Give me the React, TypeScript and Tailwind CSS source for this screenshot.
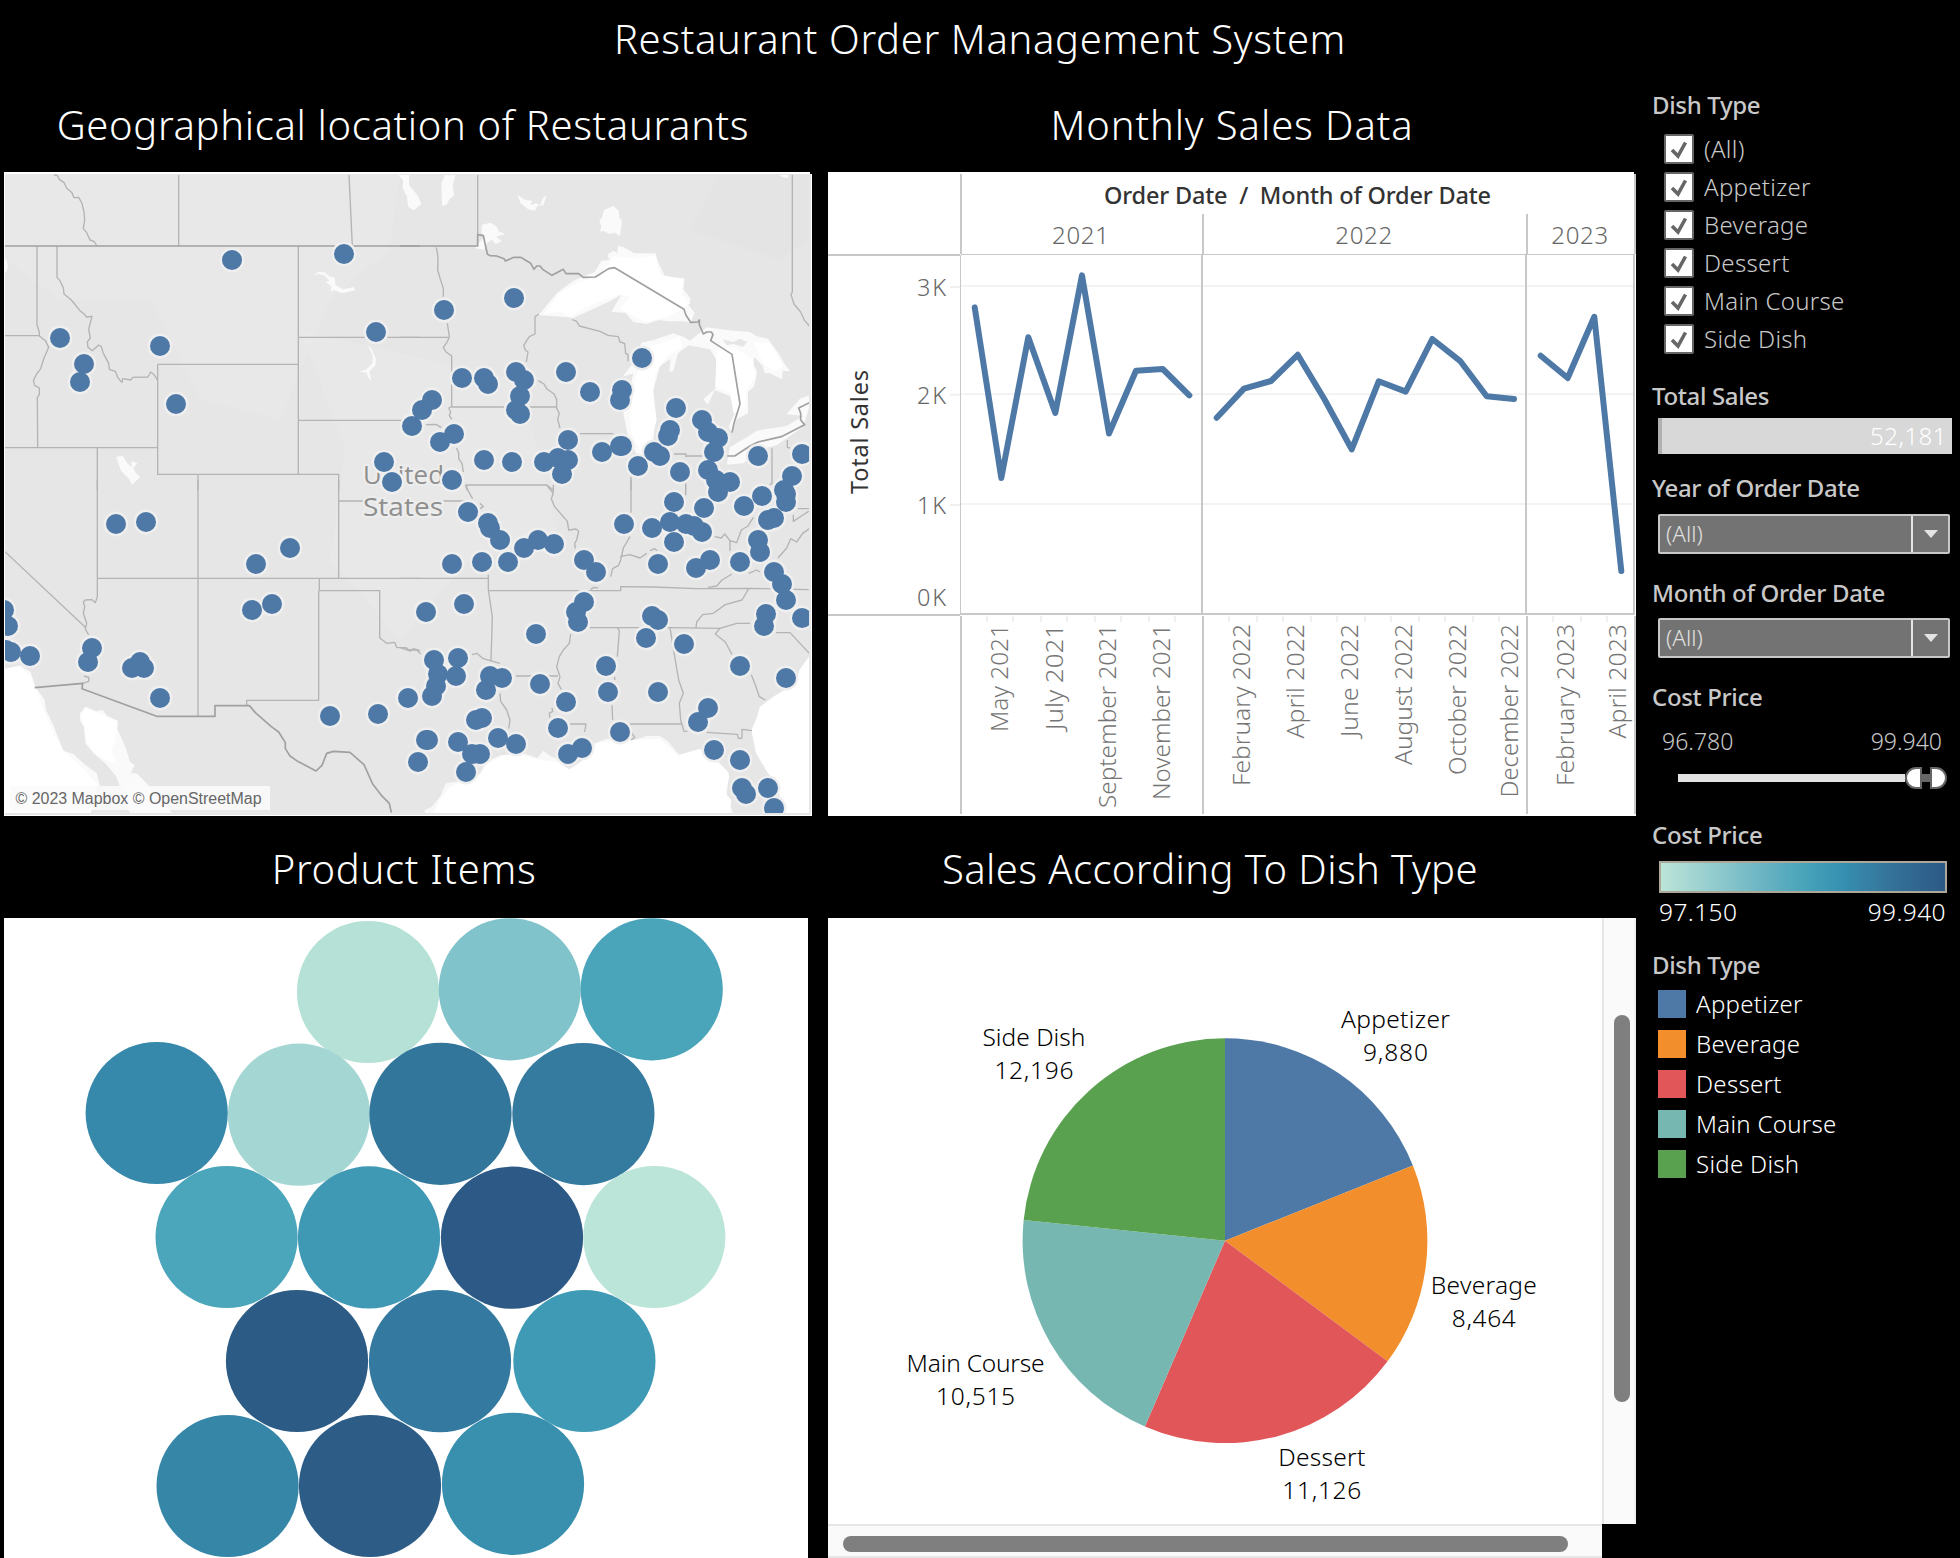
import { ReactNode } from "react";

const FONT = "font-['Noto_Sans',sans-serif]";

const DOTS: [number, number][] = [
  [232, 260], [344, 254], [376, 332], [60, 338], [84, 364], [80, 382], [160, 346], [176, 404], [384, 462], [392, 482],
  [444, 310], [514, 298], [642, 358], [566, 372], [462, 378], [484, 378], [488, 384], [516, 372], [524, 380], [520, 396],
  [516, 410], [520, 414], [432, 400], [422, 410], [412, 426], [440, 442], [454, 434], [590, 392], [622, 390], [620, 400],
  [676, 408], [702, 420], [708, 432], [718, 438], [670, 430], [668, 436], [714, 452], [758, 456], [802, 454], [568, 440],
  [602, 452], [620, 446], [622, 446], [638, 466], [654, 452], [660, 456], [484, 460], [512, 462], [544, 462], [558, 458], [568, 460],
  [562, 474], [452, 480], [680, 472], [708, 470], [716, 480], [730, 482], [792, 476], [784, 490], [762, 496], [468, 512],
  [488, 523], [490, 528], [500, 540], [524, 548], [538, 540], [554, 544], [452, 564], [482, 562], [508, 562], [584, 560],
  [596, 572], [624, 524], [652, 528], [674, 502], [670, 522], [686, 524], [694, 526], [702, 532], [704, 508], [674, 542],
  [658, 564], [696, 568], [710, 560], [740, 562], [744, 506], [718, 492], [786, 494], [786, 502], [768, 520], [774, 518],
  [758, 540], [760, 552], [774, 572], [782, 584], [786, 600], [766, 614], [764, 626], [802, 618], [426, 612], [464, 604],
  [536, 634], [584, 602], [576, 612], [578, 622], [652, 616], [658, 620], [646, 638], [684, 644], [606, 666], [608, 692],
  [658, 692], [740, 666], [786, 678], [434, 660], [458, 658], [438, 674], [456, 676], [436, 686], [432, 696], [408, 698],
  [490, 676], [502, 678], [486, 690], [540, 684], [566, 702], [558, 728], [476, 720], [482, 718], [426, 740], [428, 740],
  [458, 742], [418, 762], [498, 738], [516, 744], [472, 754], [480, 754], [466, 772], [568, 754], [582, 748], [620, 732],
  [708, 708], [698, 722], [714, 750], [740, 760], [742, 788], [746, 794], [768, 788], [774, 808], [116, 524], [146, 522],
  [290, 548], [256, 564], [252, 610], [272, 604], [4, 610], [8, 626], [6, 650], [11, 652], [30, 656], [92, 648], [88, 662],
  [132, 668], [140, 662], [144, 668], [160, 698], [330, 716], [378, 714],
];

const NW = "translate(0 160) scale(0.33333)";
const NE = "translate(400 160) scale(0.33333)";
const SW = "translate(0 480) scale(0.33333)";
const SE = "translate(400 480) scale(0.33333)";

function RestaurantMap() {
  return (
    <svg className="block h-[644px] w-[808px]" viewBox="4 172 808 644">
      <defs>
        <clipPath id="mapArea">
          <rect x="5" y="174" width="804" height="639" />
        </clipPath>
      </defs>
      <path d="M4 172h806v2h2v642H4z" fill="#fff" />
      <rect x="5" y="174" width="806" height="641" fill="#e6e6e6" />
      <g clipPath="url(#mapArea)">
        <path d="M5 174H400L390 250L330 300L280 420L200 400L150 300L60 300L5 260Z" fill="#eaeaea" opacity=".4" />
        <path d="M300 330L520 380L560 540L470 560L400 640L330 560L345 450Z" fill="#eaeaea" opacity=".5" />
        <path d="M690 230L780 260L809 240V174H720Z" fill="#e4e4e4" />

        {/* Lakes and inlets of the north west */}
        <g transform={NW} fill="#fafafa">
          <path d="M1196 45L1228 45L1226 62L1216 68L1244 96L1262 132L1242 150L1226 142L1222 112L1208 84L1210 62Z" />
          <path d="M942 346L954 336L974 337L990 350L1004 352L1006 374L1030 388L1062 381L1066 391L1024 400L1004 390L992 394L994 378L976 366L988 362L972 346L956 342Z" />
          <path d="M1104 554L1114 566L1128 596L1126 616L1116 626L1108 636L1114 662L1104 652L1100 638L1078 635L1096 630L1104 624L1118 608L1118 588Z" />
          <path d="M348 890L368 888L382 910L396 922L394 904L412 910L400 924L406 936L420 952L396 974L388 958L364 934Z" />
          <ellipse cx="14" cy="317" rx="9" ry="20" />
        </g>
        {/* Great Lakes */}
        <g transform={NE} fill="#fafafa">
          <path d="M4 45L26 45L28 76L54 108L64 132L42 150L24 138L20 96Z M124 70L134 46L166 45L158 78L162 106L148 118L140 134L126 138Z" />
          <path d="M352 104L376 120L396 122L392 136L408 130L420 136L428 116L440 104L430 136L412 138L404 152L384 148L362 130Z" />
          <path d="M612 150L640 138L656 152L658 174L666 182L660 228L644 218L628 222L610 212L600 216L604 198L598 182L606 174Z" />
          <path d="M246 194L272 188L290 200L296 214L316 222L288 230L306 244L286 252L276 238L262 250L252 270L224 264L244 240L256 232L244 218Z" />
          <path d="M584 336L604 302L628 300L622 284L640 272L652 280L654 258L672 262L702 280L766 280L776 310L796 352L854 354L850 388L872 416L866 436L884 458L872 486L846 484L802 484L776 480L740 492L700 486L676 458L634 456L664 404L630 424L520 474L490 470L416 466L470 400L520 362Z" />
          <path d="M668 650L700 608L724 548L760 540L820 520L850 530L870 542L920 502L1000 512L1050 516L1068 528L1104 536L1134 578L1150 606L1170 634L1148 632L1146 658L1110 640L1094 640L1088 618L1064 592L1056 606L1072 636L1062 680L1044 696L1044 760L1010 778L996 820L986 800L1004 760L990 708L944 690L924 734L910 718L946 686L950 600L930 568L866 556L834 580L820 632L808 636L812 596L780 618L760 690L768 770L760 840L720 900L686 838L670 760L690 690L700 640Z" />
          <path d="M990 862L1040 832L1070 812L1160 798L1210 768L1160 762L1200 716L1228 706V740L1210 800L1130 856L1074 870L1030 910L980 914Z" />
          <path d="M1138 44H1164V54L1150 52Z" />
        </g>
        <path transform={NE} d="M968 538L1000 546L1020 536L1042 546L1030 560L1000 552L980 556Z" fill="#e6e6e6" />
        <g transform={NE} fill="#fff">
          <path d="M430 464L474 404L530 370L600 350L622 320L640 288L700 296L766 286L780 344L850 358L846 404L870 430L846 448L800 470L736 486L680 456L660 446L690 410L660 402L620 418L560 440L510 472L480 452Z" />
          <path d="M690 770L706 650L750 560L840 530L846 560L800 590L766 640L758 700L770 780L750 850L720 870L694 820Z M950 572L1000 560L1060 600L1066 650L1040 690L1034 740L1000 760L992 700L946 680Z M1060 546L1110 550L1150 620L1120 634L1090 610Z" />
        </g>
        {/* Pacific, Gulf of California, Gulf of Mexico, Atlantic */}
        <g transform={SW}>
          <path d="M15 566L60 556L92 576L106 620L134 660L138 690L160 736L190 812L220 822L250 850L290 880L300 918H15Z M240 700L256 680L290 694L308 690L322 708L354 722L352 748L376 800L390 846L404 856L392 880L410 880L460 930L500 980L518 1000H390L348 888L316 850L280 820L256 790L252 740L240 722Z" fill="#fafafa" />
          <path d="M15 566L60 560L92 590L110 630L130 690L160 760L190 812L250 866L292 914L272 1000H15Z M244 704L258 684L310 706L350 724V756L336 812L350 850L330 846L290 824L262 790Z" fill="#fff" />
        </g>
        <g transform={SE}>
          <path d="M74 990L96 980L120 950L138 910L180 904L240 880L256 848L300 826L370 820L412 834L430 812L450 828L478 838L500 870L540 850L590 850L550 830L584 790L620 776L690 784L740 768L780 768L802 782L838 824L900 806L950 838L986 880L980 950L1000 1000H74Z" fill="#f8f8f8" />
          <path d="M102 996L120 960L150 920L186 904L240 886L262 850L310 826L370 826L420 840L474 846L510 870L560 830L592 788L650 782L700 780L780 776L834 826L900 808L950 848L980 870L988 890L976 940L994 960L990 1000H100Z M1230 526L1198 570L1186 610L1120 650L1080 680L1068 720L1054 750L1068 820L1104 880L1130 910L1150 1000H1230Z" fill="#fff" />
        </g>

        {/* State borders */}
        <g fill="none" stroke="#b4b4b4" strokeWidth="4" strokeLinejoin="round">
          <g transform={NW}>
            <path d="M162 45L172 46L178 58L192 68L200 84L216 98L222 113L236 112L246 130L252 156L254 180L250 206L260 218L270 240L282 244L291 258" />
            <path d="M536 45V258 M1047 45L1057 258" />
            <path d="M111 258V495L118 516L118 528L136 542L146 562L132 594L122 626L110 642L100 662L104 676L118 684L118 704L112 712L113 863" />
            <path d="M171 258V352L180 362L190 384L192 402L214 420L240 452L252 462L260 471L276 469L266 508L271 534L262 546L264 562L277 572L296 555L304 560L310 580L326 610L328 628L346 634L354 654L366 667L368 656L392 660L398 652L444 651L452 636L462 644L473 660" />
            <path d="M15 527H118 M895 258V943 M895 532H1260 M473 613H895 M473 613V943H1016V990 M895 781H1230 M15 863H473 M292 863V990 M594 943V990" />
          </g>
          <g transform={NE}>
            <path d="M233 45V224 M109 262L114 290L113 330L120 354L130 385V410 M142 490L148 530L142 545L130 562L138 576L155 588V740L146 744L152 756L148 766L155 778 M0 532H148 M155 741H470" />
            <path d="M416 462L405 470V522L388 530L371 556L376 570L384 576L379 606 M415 662L432 672L440 686L462 702L470 718L470 745L478 760L473 778L480 804" />
            <path d="M517 479L530 484L538 498L600 514L624 526L655 530L660 546L674 550L677 580L684 584L684 604" />
            <path d="M540 821H640 M822 882H858V892 M858 888H910 M1116 865V970L1110 974 M1162 840V862L1170 864 M1177 45V395L1173 404L1182 432L1202 456L1214 482L1228 498" />
            <path d="M78 794L108 793L124 803 M170 864L176 880L176 896L186 910L190 936 M196 975H440L460 990 M693 950V990 M857 970V990 M200 978V990" />
          </g>
          <g transform={SW}>
            <path d="M292 0V350L286 368L276 359L256 360L250 366L254 380L250 400L260 430L256 448L266 464 M15 215L256 442 M292 295H1260 M594 0V709 M1016 0V295 M1016 63H1090" />
            <path d="M958 295V332H1139V473L1160 490L1184 487L1190 502L1220 504L1230 514L1240 506L1260 512 M956 332V661H740V676 M252 588L266 592V604L248 610" />
          </g>
          <g transform={SE}>
            <path d="M0 295H265 M265 284V330L277 410L273 544 M265 332H662V320L760 321L890 326L1046 325L1226 329 M130 63H200 M196 16L212 46L218 56 M240 70L250 80L240 86" />
            <path d="M440 15L460 40L454 56L464 80L502 124L506 150L528 147L536 154L530 180L524 190L526 206 M693 0V98 M857 16V46 M460 14V36" />
            <path d="M690 170L670 204L662 240L656 256L638 266L632 290 M660 230L690 224L720 234L740 220 M750 212L764 206L772 212 M944 170L964 174L974 162L990 182L1010 188L1024 150L1044 138L1060 112 M990 182V212" />
            <path d="M572 328L582 322L594 324 M570 443H812L960 445L1010 430H1050 M1128 458H1170L1228 520 M888 444L890 426L908 404L940 400L976 374L1026 360L1046 326" />
            <path d="M652 443L658 452L652 530 M644 590V600 M636 676L638 720 M512 462L508 490L490 510L478 530L470 560L480 590L474 610L484 628 M456 684L458 694L448 700L450 714" />
            <path d="M810 443L824 530L836 600L850 640L838 670L842 720L852 754H862 M690 732H846 M510 732H558L554 756 M920 757L1012 763L1016 776L1026 774V748L1056 752" />
            <path d="M960 445L946 462L976 486L996 524 M1054 584L1068 620L1078 650L1096 660 M348 588H474 M216 524L230 520L250 536L300 550 M300 640L302 664L320 690L330 720L326 746" />
            <path d="M0 502L20 510L50 510L62 522 M924 322L950 318L966 300L996 282 M1046 280L1070 270L1080 276 M1134 234L1160 204L1172 176L1190 186L1208 160L1228 146 M1180 104V124L1204 108L1226 94 M1194 86H1228 M696 760L704 772L694 780" />
          </g>
        </g>
        {/* National borders */}
        <g fill="none" stroke="#a0a0a0" strokeWidth="5" strokeLinejoin="round">
          <path transform={NW} d="M15 258H1260" />
          <path transform={NE} d="M0 258H233V224L250 227L262 282L270 287L290 288L312 296L316 303L342 292H362L382 304L392 310L402 328L410 318L420 318L428 328L456 346L490 328L498 341L536 341L550 352L586 351L626 326L644 323L852 448L858 466L872 487L894 486L898 480V494L910 522L920 516H934L939 524L932 542L996 583L1020 732L1002 790L996 818 M982 888H1004L1050 858L1074 846L1144 830L1214 794L1202 780V760L1196 744L1228 728" />
          <path transform={SW} d="M104 623L248 610L246 626L470 709H645V677H748L766 698L814 740L836 756L856 788V806L870 828L890 842L948 873L966 856L980 820L1000 814L1050 817L1092 854L1118 912L1144 946L1168 970L1174 998" />
        </g>

        <g className="font-['Open_Sans',sans-serif]" fontSize="25" fill="#8f8f8f" stroke="#ededed" strokeWidth="4" paintOrder="stroke">
          <text x="363" y="484" textLength="81" lengthAdjust="spacingAndGlyphs">United</text>
          <text x="363" y="516" textLength="80" lengthAdjust="spacingAndGlyphs">States</text>
        </g>

        <g fill="#efefef">
          {DOTS.map(([x, y], i) => <circle key={i} cx={x} cy={y} r="12.4" />)}
        </g>
        <g fill="#4e79a7">
          {DOTS.map(([x, y], i) => <circle key={i} cx={x} cy={y} r="10" />)}
        </g>
        <rect x="10" y="786" width="260" height="24" fill="#fafafa" fillOpacity=".85" />
        <text x="15.5" y="804" fontSize="16" textLength="246" lengthAdjust="spacingAndGlyphs" fill="#666" className="font-['Liberation_Sans',sans-serif]">© 2023 Mapbox © OpenStreetMap</text>
      </g>
    </svg>
  );
}

const SERIES = [
  "974.7,307.4 1001.3,478 1028.3,337.3 1055.3,413 1082,275.4 1109,433.5 1136,370.7 1162.7,369 1189.3,395.4",
  "1216.7,417.7 1244,388.6 1271,381 1297.7,354.8 1324.3,399 1351.7,449.3 1378.7,381.3 1405.7,391.6 1432.3,339 1460,360.8 1486.7,396.3 1514,398.9",
  "1540.7,355.7 1567.7,378 1594.3,316.8 1621.3,571",
];

const MONTHS: [string, number, number][] = [
  ["May 2021", 1008, 108], ["July 2021", 1062.5, 106], ["September 2021", 1116.2, 184], ["November 2021", 1170, 176],
  ["February 2022", 1250.2, 162], ["April 2022", 1304.3, 114.5], ["June 2022", 1358.2, 113], ["August 2022", 1412.2, 141],
  ["October 2022", 1466.2, 151], ["December 2022", 1518.3, 173.5], ["February 2023", 1574.2, 162], ["April 2023", 1626.2, 114.5],
];

const TICKS = [988, 1014, 1042, 1068, 1096, 1122, 1150, 1176, 1230, 1258, 1284, 1312, 1338, 1366, 1392, 1420, 1446, 1474, 1500, 1554, 1582, 1608];

function SalesChart() {
  return (
    <svg className={`block h-[644px] w-[808px] ${FONT}`} viewBox="828 172 808 644">
      <path d="M828 172h806v2h2v642H828z" fill="#fff" />
      <g stroke="#f0f0f0" strokeWidth="1.5">
        <path d="M961 286H1634M961 394.3H1634M961 504H1634" />
        <path d="M950 287H960M950 394.8H960M950 505H960" strokeWidth="2" />
        {TICKS.map((x) => <path key={x} d={`M${x - 1} 616V622`} strokeWidth="2" />)}
      </g>
      <g stroke="#c8c8c8" strokeWidth="2" fill="none">
        <path d="M961 174V254M1203 214V254M1527 214V254M1635 174V254" />
        <path d="M828 255H960M828 615H960" />
        <path d="M961 254.5H1635" strokeWidth="1" />
        <path d="M960.5 255V613" strokeWidth="1" />
        <path d="M960 614H1635M1202 255V614M1526 255V614M1634 255V614" />
        <path d="M961 616V814M1203 616V814M1527 616V814M1635 616V814" />
      </g>
      <g fill="none" stroke="#4e79a7" strokeWidth="6" strokeLinecap="round" strokeLinejoin="round">
        {SERIES.map((s) => <polyline key={s} points={s} />)}
      </g>
      <g fontSize="23.5" fill="#666" className="font-[350]" textAnchor="end">
        <text x="946" y="295.5" textLength="29">3K</text>
        <text x="946" y="403.5" textLength="29">2K</text>
        <text x="946" y="513.5" textLength="29">1K</text>
        <text x="946" y="605.5" textLength="29">0K</text>
      </g>
      <g fontSize="24" fill="#666" className="font-[350]" textAnchor="middle">
        <text x="1080.5" y="243.5" textLength="57">2021</text>
        <text x="1363.7" y="243.5" textLength="57">2022</text>
        <text x="1579.7" y="243.5" textLength="57">2023</text>
      </g>
      <g fontSize="23.5" fill="#333">
        <text x="1104" y="203.5" textLength="387" className="font-medium whitespace-pre">Order Date  /  Month of Order Date</text>
        <text transform="translate(868 494) rotate(-90)" textLength="124" className="font-[430]">Total Sales</text>
      </g>
      <g fontSize="23.5" fill="#757575" className="font-[340]">
        {MONTHS.map(([label, x, length]) => (
          <text key={label} transform={`translate(${x} 624) rotate(-90)`} textAnchor="end" textLength={length} lengthAdjust="spacingAndGlyphs">{label}</text>
        ))}
      </g>
    </svg>
  );
}

const BUBBLES: [number, number, string][] = [
  [368, 992, "#b5e1d6"], [509.8, 989.3, "#81c3cb"], [651.7, 989.3, "#4aa4ba"],
  [156.7, 1113, "#3789ab"], [299, 1114.7, "#a4d7d3"], [440.5, 1113.8, "#33769c"], [583.4, 1114.1, "#357a9f"],
  [226.6, 1237, "#4ca6bb"], [369, 1237.4, "#3f98b4"], [512, 1237.7, "#2c5985"], [654.3, 1237, "#bce5d9"],
  [297, 1361, "#2c5b86"], [440, 1361.2, "#34799f"], [584.4, 1361, "#3f9ab5"],
  [227.6, 1486, "#3686a8"], [370, 1486, "#2d5c87"], [513, 1483.8, "#388fae"],
];

function ProductBubbles() {
  return (
    <svg className="block h-[640px] w-[804px] bg-white" viewBox="4 918 804 640">
      {BUBBLES.map(([x, y, fill]) => <circle key={`${x}-${y}`} cx={x} cy={y} r="71.1" fill={fill} />)}
    </svg>
  );
}

const DISHES: { name: string; value: number; color: string; x: number; y: number; w: number; vw: number }[] = [
  { name: "Appetizer", value: 9880, color: "#4e79a7", x: 1395.4, y: 1028, w: 109, vw: 65 },
  { name: "Beverage", value: 8464, color: "#f28e2b", x: 1483.8, y: 1294, w: 106, vw: 64 },
  { name: "Dessert", value: 11126, color: "#e15759", x: 1321.8, y: 1466, w: 87, vw: 79 },
  { name: "Main Course", value: 10515, color: "#76b7b2", x: 975.6, y: 1372, w: 138, vw: 79 },
  { name: "Side Dish", value: 12196, color: "#59a14f", x: 1033.9, y: 1046, w: 103, vw: 79 },
];

function DishPie() {
  const total = DISHES.reduce((sum, d) => sum + d.value, 0);
  const cx = 1225, cy = 1240.7, r = 202.4;
  let angle = 0;
  return (
    <svg className={`block h-[606px] w-[774px] bg-white ${FONT}`} viewBox="828 918 774 606">
      {DISHES.map((d) => {
        const start = angle;
        angle += (d.value / total) * Math.PI * 2;
        const p = (a: number) => `${cx + r * Math.sin(a)} ${cy - r * Math.cos(a)}`;
        return <path key={d.name} d={`M${cx} ${cy}L${p(start)}A${r} ${r} 0 0 1 ${p(angle)}Z`} fill={d.color} />;
      })}
      <g fontSize="24.5" className="font-[350]" textAnchor="middle" fill="#000">
        {DISHES.map((d) => (
          <g key={d.name}>
            <text x={d.x} y={d.y - 0.5} textLength={d.w}>{d.name}</text>
            <text x={d.x} y={d.y + 32.5} textLength={d.vw}>{d.value.toLocaleString("en-US")}</text>
          </g>
        ))}
      </g>
    </svg>
  );
}

function Heading({ children, className = "" }: { children: ReactNode; className?: string }) {
  return <h3 className={`-ml-[6px] h-[30px] text-[24px] leading-[30px] font-medium tracking-[-0.35px] whitespace-nowrap text-[#c8c8c8] ${className}`}>{children}</h3>;
}

function Select() {
  return (
    <div className="flex h-10 w-[292px] rounded-[2px] border-2 border-[#c8c8c8] bg-[#737373]">
      <span className="flex-1 pl-[6px] text-[22.5px] leading-[35px] font-light text-[#e0e0e0]">(All)</span>
      <span className="flex w-[37px] items-center justify-center border-l-2 border-[#e4e4e4]">
        <svg className="h-2 w-[14px]" viewBox="0 0 14 8"><path d="M0 0H14L7 8Z" fill="#e4e4e4" /></svg>
      </span>
    </div>
  );
}

function Title({ children, className = "" }: { children: ReactNode; className?: string }) {
  return <h2 className={`flex items-center justify-center text-[40px] leading-none font-[340] whitespace-nowrap text-white ${className}`}>{children}</h2>;
}

const NAMES = ["(All)", "Appetizer", "Beverage", "Dessert", "Main Course", "Side Dish"];

function Sidebar() {
  return (
    <aside className="w-[324px] pt-[13px] pl-[22px]">
      <Heading>Dish Type</Heading>
      <ul className="mt-[14px] ml-[6px] flex flex-col gap-2">
        {NAMES.map((n) => (
          <li key={n} className="flex h-[30px] items-center gap-[10px] text-[24px] leading-[30px] font-[330] tracking-[0.3px] text-[#c8c8c8]">
            <span className="flex size-[30px] items-center justify-center rounded-[2px] border-2 border-[#666] bg-white">
              <svg className="size-[26px]" viewBox="0 0 26 26"><path d="M6 14L12 20L19.5 6.5" fill="none" stroke="#666" strokeWidth="3.6" /></svg>
            </span>
            {n}
          </li>
        ))}
      </ul>
      <Heading className="mt-[27px]">Total Sales</Heading>
      <div className="mt-[7px] h-9 w-[294px] border-l-4 border-[#b0b0b0] bg-[#d8d8d8] pr-[5px] text-right text-[24px] leading-[36px] font-[350] tracking-[0.5px] text-white">52,181</div>
      <Heading className="mt-[19px] mb-[11px]">Year of Order Date</Heading>
      <Select />
      <Heading className="mt-6 mb-[10px]">Month of Order Date</Heading>
      <Select />
      <Heading className="mt-6">Cost Price</Heading>
      <div className="mt-[14px] flex h-[30px] w-[284px] justify-between pl-[4px] text-[23px] leading-[30px] font-[330] text-[#c8c8c8]">
        <span>96.780</span><span>99.940</span>
      </div>
      <div className="mt-[11px] ml-5 flex h-[22px] items-center">
        <div className="h-2 w-[227px] bg-[#e4e4e4]" />
        <div className="h-[22px] w-[17px] rounded-l-full border-2 border-[#666] bg-white" />
        <div className="h-2 w-2 bg-[#666]" />
        <div className="h-[22px] w-[17px] rounded-r-full border-2 border-[#666] bg-white" />
      </div>
      <Heading className="mt-[31px]">Cost Price</Heading>
      <div className="mt-[11px] ml-px h-8 w-[288px] border-2 border-[#aba799] bg-[linear-gradient(90deg,#bce4d8_0%,#8fcacd_20%,#6ab4c3_36%,#45a2b9_52%,#368fb0_64%,#35749b_80%,#2c5985_100%)]" />
      <div className="mt-1 flex h-[30px] w-[288px] justify-between pl-px text-[24.5px] leading-[30px] font-[340] tracking-[0.4px] text-white">
        <span>97.150</span><span>99.940</span>
      </div>
      <Heading className="mt-[23px]">Dish Type</Heading>
      <ul className="mt-[10px] flex flex-col gap-3">
        {DISHES.map((d) => (
          <li key={d.name} className="flex h-7 items-center gap-[10px] text-[24px] leading-[28px] font-[340] tracking-[0.3px] text-white">
            <span className="size-7" style={{ backgroundColor: d.color }} />
            {d.name}
          </li>
        ))}
      </ul>
    </aside>
  );
}

export default function App() {
  return (
    <div className={`h-[1558px] w-[1960px] overflow-hidden bg-black ${FONT}`}>
      <h1 className="flex h-[77px] items-center justify-center text-[40px] leading-none font-[340] tracking-[0.65px] whitespace-nowrap text-white">
        Restaurant Order Management System
      </h1>
      <div className="flex">
        <main className="grid grid-cols-[808px_808px] gap-x-4 pl-1">
          <section>
            <Title className="h-[95px] w-[798px] tracking-[0.65px]">Geographical location of Restaurants</Title>
            <RestaurantMap />
          </section>
          <section>
            <Title className="h-[95px] tracking-[0.9px]">Monthly Sales Data</Title>
            <SalesChart />
          </section>
          <section>
            <Title className="h-[102px] w-[800px] pt-[3px] tracking-[0.7px]">Product Items</Title>
            <ProductBubbles />
          </section>
          <section>
            <Title className="h-[102px] w-[764px] pt-[3px] tracking-[0.4px]">Sales According To Dish Type</Title>
            <div className="flex">
              <DishPie />
              <div className="h-[606px] w-[34px] border-x-2 border-l-[#e6e6e6] border-r-[#f0f0f0] bg-[#fafafa] pt-[97px] pl-[10px]">
                <div className="h-[387px] w-4 rounded-full bg-[#7f7f7f]" />
              </div>
            </div>
            <div className="h-[34px] w-[774px] border-y-2 border-[#e6e6e6] bg-[#fafafa] pt-[10px] pl-[15px]">
              <div className="h-4 w-[725px] rounded-full bg-[#7f7f7f]" />
            </div>
          </section>
        </main>
        <Sidebar />
      </div>
    </div>
  );
}
